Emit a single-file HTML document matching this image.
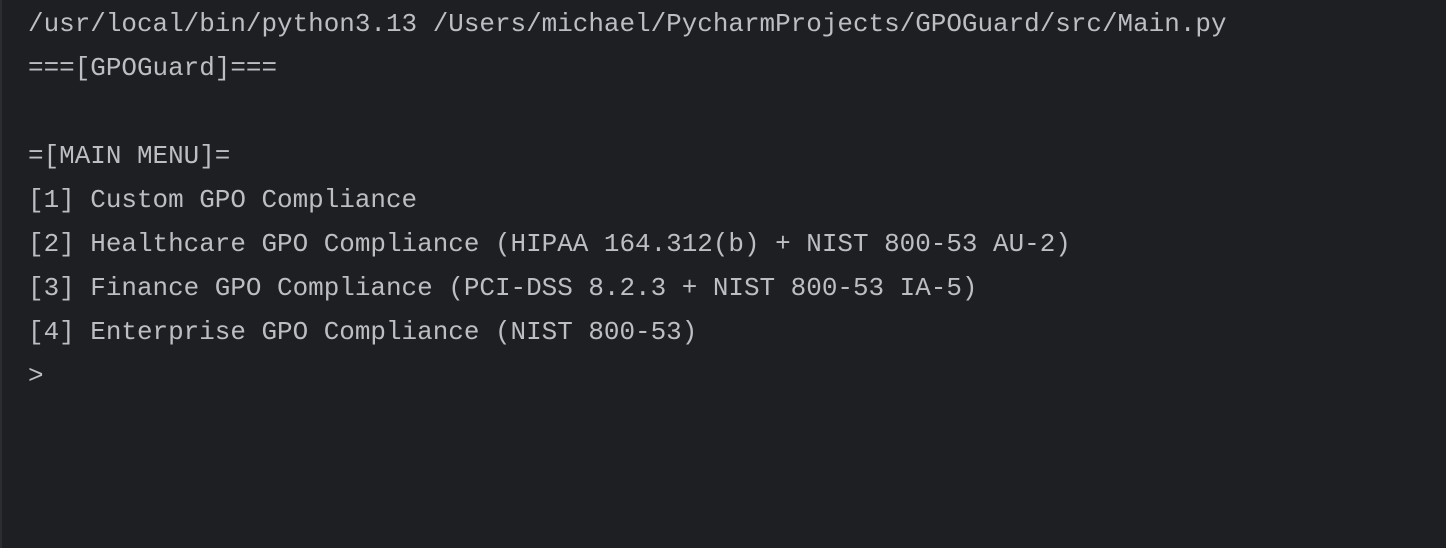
<!DOCTYPE html>
<html><head><style>
html,body{margin:0;padding:0;}
body{width:1446px;height:548px;background:#1e1f22;overflow:hidden;position:relative;border-left:2px solid #2b2d30;box-sizing:border-box;}
pre{margin:0;position:absolute;left:26px;top:2px;font-family:"Liberation Mono",monospace;font-size:25.95px;line-height:44px;color:#bcbec4;}
</style></head><body><pre>/usr/local/bin/python3.13 /Users/michael/PycharmProjects/GPOGuard/src/Main.py
===[GPOGuard]===

=[MAIN MENU]=
[1] Custom GPO Compliance
[2] Healthcare GPO Compliance (HIPAA 164.312(b) + NIST 800-53 AU-2)
[3] Finance GPO Compliance (PCI-DSS 8.2.3 + NIST 800-53 IA-5)
[4] Enterprise GPO Compliance (NIST 800-53)
&gt;</pre></body></html>
